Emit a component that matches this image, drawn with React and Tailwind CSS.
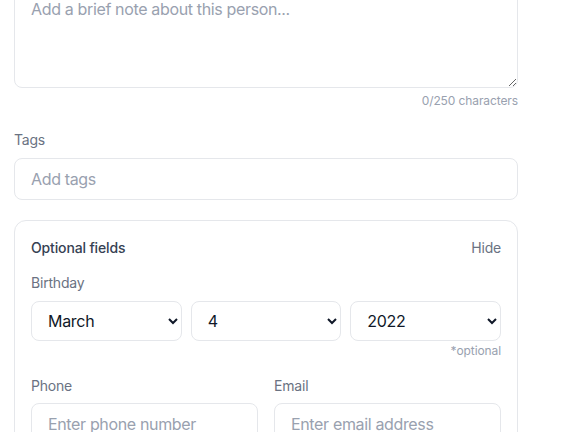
import { useState } from "react";

const months = ["January", "February", "March", "April", "May", "June", "July", "August", "September", "October", "November", "December"];

const App = () => {
  const [note, setNote] = useState("");
  const [month, setMonth] = useState("March");
  const [day, setDay] = useState("4");
  const [year, setYear] = useState("2022");

  return (
    <div className="h-[432px] overflow-hidden bg-white font-['Inter',sans-serif]">
      <div className="w-[504px] ml-[14px] -mt-[16px]">
        {/* Note */}
        <div>
          <textarea
            value={note}
            onChange={(e) => setNote(e.target.value)}
            placeholder="Add a brief note about this person..."
            className="block w-full h-[104px] rounded-lg border border-gray-200 px-4 py-3 text-base leading-6 tracking-[-0.35px] text-gray-900 placeholder:text-gray-400 focus:outline-none"
          />
          <div className="mt-[5px] text-right text-xs tracking-[-0.1px] text-gray-400">{note.length}/250 characters</div>
        </div>

        {/* Tags */}
        <div className="mt-[21px]">
          <label className="block text-sm tracking-[-0.2px] text-gray-500">Tags</label>
          <input
            placeholder="Add tags"
            className="mt-[8px] block w-full h-[42px] rounded-lg border border-gray-200 px-4 text-base tracking-[-0.35px] text-gray-900 placeholder:text-gray-400 focus:outline-none"
          />
        </div>

        {/* Optional fields */}
        <div className="mt-[20px] rounded-xl border border-gray-200 px-4 pt-[17px] pb-4">
          <div className="flex items-center justify-between">
            <span className="text-sm font-medium tracking-[-0.15px] text-gray-700">Optional fields</span>
            <button className="text-sm tracking-[-0.2px] text-gray-500">Hide</button>
          </div>

          <label className="mt-[15px] block text-sm tracking-[-0.2px] text-gray-500">Birthday</label>
          <div className="mt-[8px] grid grid-cols-3 gap-[9px]">
            <select
              value={month}
              onChange={(e) => setMonth(e.target.value)}
              className="h-[40px] rounded-lg border border-gray-200 bg-white px-3 text-base tracking-[-0.3px] text-gray-900 focus:outline-none"
            >
              {months.map((m) => (
                <option key={m}>{m}</option>
              ))}
            </select>
            <select
              value={day}
              onChange={(e) => setDay(e.target.value)}
              className="h-[40px] rounded-lg border border-gray-200 bg-white px-3 text-base tracking-[-0.3px] text-gray-900 focus:outline-none"
            >
              {Array.from({ length: 31 }, (_, i) => (
                <option key={i}>{i + 1}</option>
              ))}
            </select>
            <select
              value={year}
              onChange={(e) => setYear(e.target.value)}
              className="h-[40px] rounded-lg border border-gray-200 bg-white px-3 text-base tracking-[-0.3px] text-gray-900 focus:outline-none"
            >
              {Array.from({ length: 50 }, (_, i) => (
                <option key={i}>{2024 - i}</option>
              ))}
            </select>
          </div>
          <div className="mt-[2px] text-right text-xs tracking-[-0.1px] text-gray-400">*optional</div>

          <div className="mt-[17px] grid grid-cols-2 gap-4">
            <div>
              <label className="block text-sm tracking-[-0.2px] text-gray-500">Phone</label>
              <input
                placeholder="Enter phone number"
                className="mt-[7px] block w-full h-[42px] rounded-lg border border-gray-200 px-4 text-base tracking-[-0.35px] text-gray-900 placeholder:text-gray-400 focus:outline-none"
              />
            </div>
            <div>
              <label className="block text-sm tracking-[-0.2px] text-gray-500">Email</label>
              <input
                placeholder="Enter email address"
                className="mt-[7px] block w-full h-[42px] rounded-lg border border-gray-200 px-4 text-base tracking-[-0.35px] text-gray-900 placeholder:text-gray-400 focus:outline-none"
              />
            </div>
          </div>
        </div>
      </div>
    </div>
  );
};

export default App;
